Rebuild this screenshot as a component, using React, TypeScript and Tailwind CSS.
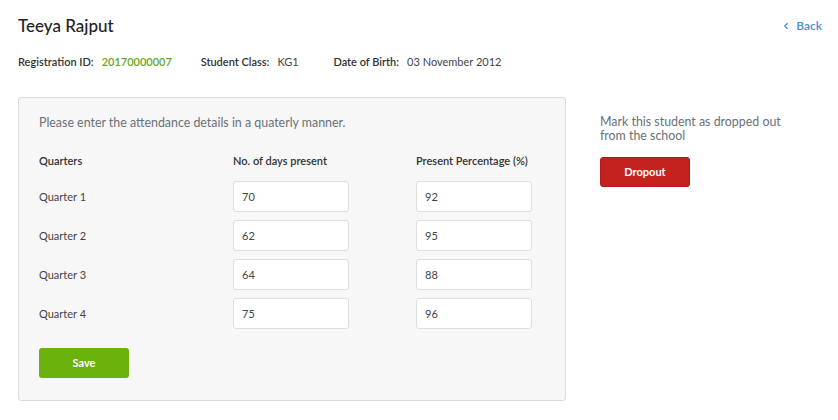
import { ChevronLeft } from "lucide-react";

const rows = [
  { label: "Quarter 1", days: "70", pct: "92" },
  { label: "Quarter 2", days: "62", pct: "95" },
  { label: "Quarter 3", days: "64", pct: "88" },
  { label: "Quarter 4", days: "75", pct: "96" },
];

export default function App() {
  return (
    <div className="min-h-[420px] w-[838px] bg-white font-['Lato',sans-serif] text-[#333]">
      {/* Header */}
      <div className="flex items-center justify-between pl-[18px] pr-[16px] pt-[15px]">
        <h1 className="text-[17px] font-medium leading-[22px] text-[#222]">Teeya Rajput</h1>
        <a className="flex items-center gap-[5px] text-[12px] font-semibold text-[#3d8fe0]" href="#">
          <ChevronLeft size={10} strokeWidth={3} />
          Back
        </a>
      </div>

      <div className="mt-[18px] flex items-center pl-[18px] text-[11px] leading-[14px]">
        <span className="font-semibold text-[#333]">Registration ID:</span>
        <span className="ml-[8px] w-[99px] font-semibold text-[#64a817]">20170000007</span>
        <span className="font-semibold text-[#333]">Student Class:</span>
        <span className="ml-[8px] w-[56px] text-[#444]">KG1</span>
        <span className="font-semibold text-[#333]">Date of Birth:</span>
        <span className="ml-[8px] text-[#444]">03 November 2012</span>
      </div>

      <div className="mt-[28px] flex items-start pl-[18px]">
        {/* Attendance panel */}
        <div className="w-[548px] rounded-[3px] border border-[#dcdcdc] bg-[#f7f7f7] px-[20px] pb-[22px] pt-[16px]">
          <p className="text-[12.4px] leading-[18px] text-[#6b7078]">
            Please enter the attendance details in a quaterly manner.
          </p>
          <div className="mt-[22px] grid grid-cols-[194px_183px_1fr] text-[11px] font-semibold leading-[14px] text-[#333]">
            <span>Quarters</span>
            <span>No. of days present</span>
            <span>Present Percentage (%)</span>
          </div>
          <div className="mt-[13px] flex flex-col gap-[8px]">
            {rows.map((r) => (
              <div key={r.label} className="grid grid-cols-[194px_183px_1fr] items-center text-[11px]">
                <span className="pt-[2px] text-[#444]">{r.label}</span>
                <input
                  readOnly
                  value={r.days}
                  className="h-[31px] w-[116px] rounded-[3px] border border-[#dedede] bg-white px-[8px] text-[11px] text-[#444] outline-none"
                />
                <input
                  readOnly
                  value={r.pct}
                  className="h-[31px] w-[116px] rounded-[3px] border border-[#dedede] bg-white px-[8px] text-[11px] text-[#444] outline-none"
                />
              </div>
            ))}
          </div>
          <button
            type="button"
            className="mt-[19px] h-[30px] w-[90px] rounded-[3px] bg-[#6cb20c] text-[11px] font-bold text-white"
          >
            Save
          </button>
        </div>

        {/* Dropout */}
        <div className="ml-[34px] mt-[18px] w-[200px]">
          <p className="text-[12.4px] leading-[14px] text-[#6b7078]">
            Mark this student as dropped out from the school
          </p>
          <button
            type="button"
            className="mt-[14px] h-[30px] w-[90px] rounded-[3px] border border-[#b01c1a] bg-[#c3221f] text-[11px] font-bold text-white"
          >
            Dropout
          </button>
        </div>
      </div>
    </div>
  );
}
